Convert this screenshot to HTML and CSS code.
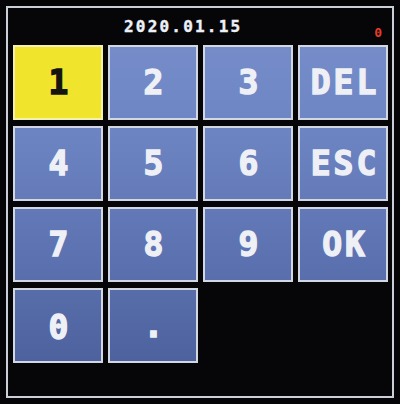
FILE: index.html
```html
<!DOCTYPE html>
<html>
<head>
<meta charset="utf-8">
<link rel="stylesheet" href="styles.css">
</head>
<body>
<div class="screen">
  <div class="header">
    <span class="date">2020.01.15</span>
    <span class="count">0</span>
  </div>
  <div class="keypad">
    <div class="key key-active">1</div>
    <div class="key">2</div>
    <div class="key">3</div>
    <div class="key">DEL</div>
    <div class="key">4</div>
    <div class="key">5</div>
    <div class="key">6</div>
    <div class="key">ESC</div>
    <div class="key">7</div>
    <div class="key">8</div>
    <div class="key">9</div>
    <div class="key">OK</div>
    <div class="key key-zero">0</div>
    <div class="key">.</div>
  </div>
</div>
</body>
</html>
```
FILE: styles.css
```css
html, body {
  margin: 0;
  padding: 0;
  background: #050507;
}
body {
  width: 400px;
  height: 404px;
  overflow: hidden;
}
.screen {
  box-sizing: border-box;
  margin: 6px 0 0 6px;
  width: 388px;
  height: 392px;
  border: 2px solid #c9ced8;
  background: #060609;
}
.header {
  display: flex;
  height: 37px;
  padding: 0 10px 0 116px;
  box-sizing: border-box;
  font-family: "DejaVu Sans Mono", monospace;
  font-weight: bold;
}
.date {
  margin-top: 11px;
  font-size: 16px;
  line-height: 16px;
  letter-spacing: 2.2px;
  color: #eef0f8;
  -webkit-text-stroke: 0.4px #eef0f8;
}
.count {
  margin-left: auto;
  margin-top: 18px;
  font-size: 13px;
  line-height: 13px;
  color: #e83a2a;
}
.keypad {
  display: grid;
  grid-template-columns: repeat(4, 90px);
  grid-template-rows: repeat(4, 75px);
  column-gap: 5px;
  row-gap: 6px;
  padding-left: 5px;
}
.key {
  box-sizing: border-box;
  display: flex;
  align-items: center;
  justify-content: center;
  padding-left: 4px;
  border: 2px solid #d3d7e2;
  background: linear-gradient(#7890cc 0px, #6f86c4 120px, #5c72b0 260px, #4a5f9a 380px) fixed;
  color: #eef0f6;
  font-family: "DejaVu Sans Mono", monospace;
  font-weight: bold;
  font-size: 33px;
  letter-spacing: 3px;
  -webkit-text-stroke: 1.4px #eef0f6;
}
.key-active {
  background: #f1e42c;
  border-color: #f4f0b0;
  color: #141410;
  -webkit-text-stroke: 1.4px #141410;
}
.key-zero {
  padding-top: 3px;
}
```
